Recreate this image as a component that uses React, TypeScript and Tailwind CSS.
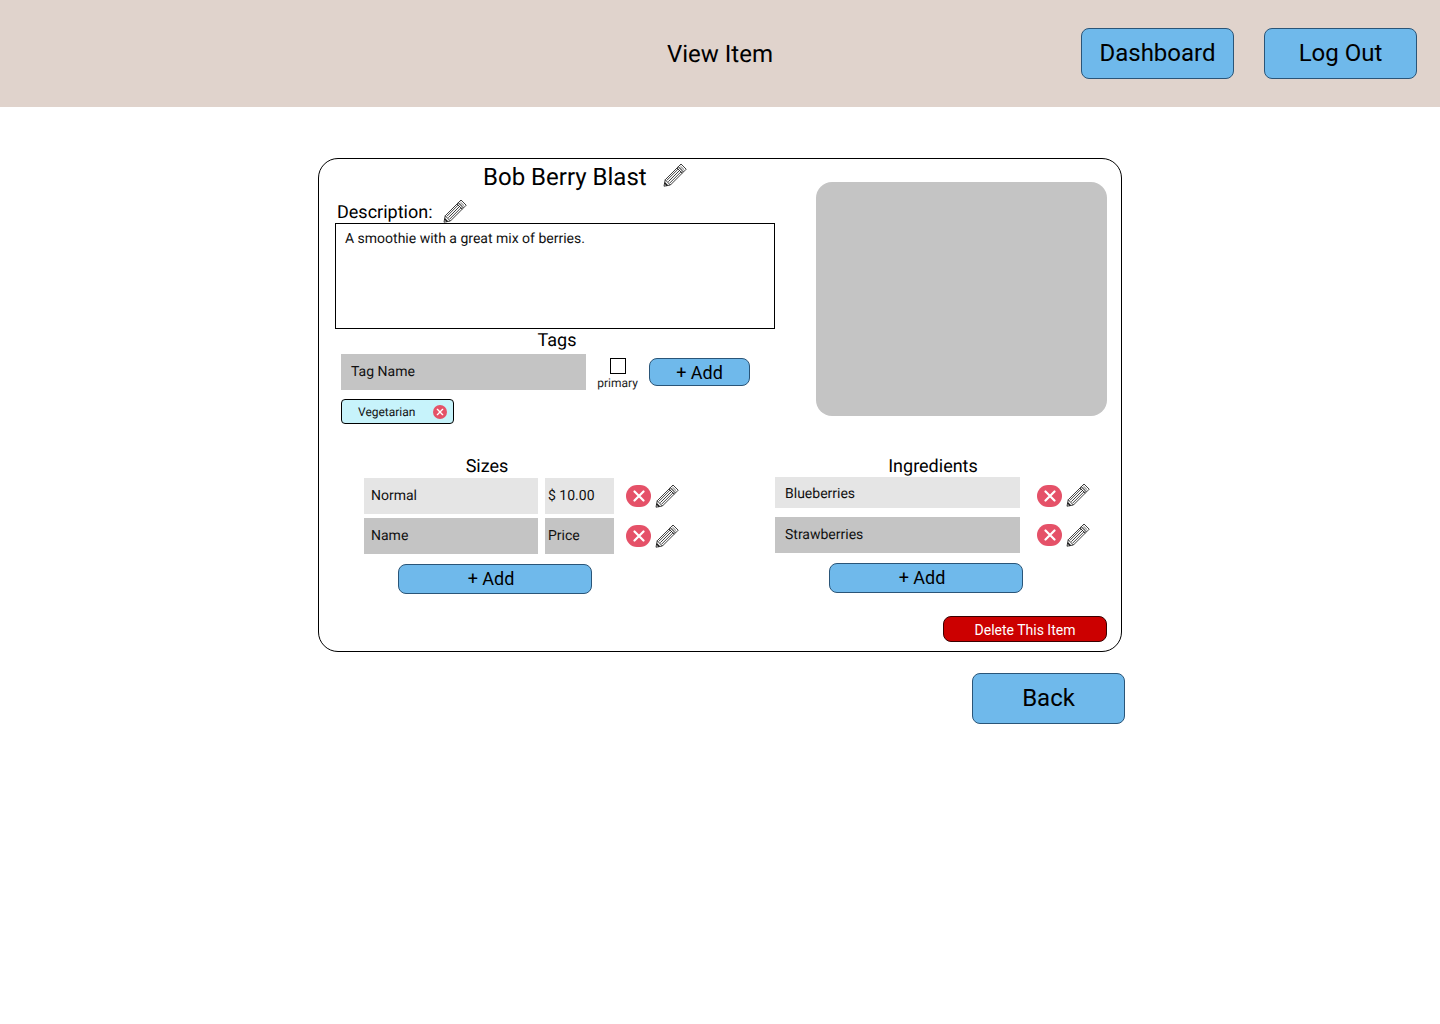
import React from "react";

function Pencil({ className = "" }: { className?: string }) {
  return (
    <svg viewBox="0 0 24 24" className={`block w-6 h-6 shrink-0 ${className}`} fill="none" stroke="#1a1a1a" strokeWidth="0.85">
      <path d="M18 1 L23.2 6.2 L7.4 22 L1 23.2 L2.2 16.8 Z" fill="#fff" />
      <path d="M15.2 3.8 L20.4 9" />
      <path d="M14 5 L19.2 10.2" />
      <path d="M15.4 5.8 L3.9 17.3" />
      <path d="M16.9 7.1 L5.3 18.7" />
      <path d="M18.2 8.6 L6.7 20.1" />
      <path d="M2.2 16.8 L7.4 22" />
      <path d="M1.6 19.8 L4.4 22.6" strokeWidth="1.6" />
      <path d="M17.4 3 L21 6.6" strokeWidth="0.6" />
      <path d="M16.3 4 L19.9 7.6" strokeWidth="0.6" />
    </svg>
  );
}

function RemoveBadge() {
  return (
    <span className="flex w-[25px] h-[22px] shrink-0 items-center justify-center rounded-[11px] bg-[#e55168]">
      <svg viewBox="0 0 12 12" className="block w-3 h-3" stroke="#fff" strokeWidth="2.2" strokeLinecap="round">
        <path d="M1.5 1.5 L10.5 10.5 M10.5 1.5 L1.5 10.5" />
      </svg>
    </span>
  );
}

function BlueButton({ className, children }: { className: string; children: React.ReactNode }) {
  return (
    <button className={`flex items-center justify-center bg-[#6fb9eb] border border-[#2a5578] text-black ${className}`}>
      {children}
    </button>
  );
}

function Field({ className, children }: { className: string; children: React.ReactNode }) {
  return <div className={`flex items-center text-sm text-[#111] ${className}`}>{children}</div>;
}

export default function App() {
  return (
    <div className="min-h-[1024px] bg-white text-black font-['Roboto',sans-serif] [text-rendering:geometricPrecision]">
      <header className="flex h-[107px] items-center bg-[#e0d3cc]">
        <h1 className="ml-[667px] w-[414px] text-2xl leading-7 font-normal">View Item</h1>
        <BlueButton className="w-[153px] h-[51px] rounded-lg pb-[1px] text-2xl">Dashboard</BlueButton>
        <BlueButton className="ml-[30px] w-[153px] h-[51px] rounded-lg pb-[1px] text-2xl">Log Out</BlueButton>
      </header>

      <main className="ml-[318px] mt-[51px] w-[807px]">
        <section className="w-[804px] h-[494px] rounded-[20px] border border-black">
          <div className="flex">
            <div className="w-[456px] ml-[16px]">
              <div className="flex h-[38px] items-center pl-[148px]">
                <h2 className="-mt-[2px] text-2xl leading-7 font-normal">Bob Berry Blast</h2>
                <Pencil className="ml-[16px] -mt-[6px]" />
              </div>
              <div className="flex h-[26px] items-center pl-[2px]">
                <span className="mt-[5px] text-lg leading-6">Description:</span>
                <Pencil className="ml-[11px] mt-[2px]" />
              </div>
              <div className="h-[106px] w-[440px] border border-black px-[9px] pt-[7px] text-sm leading-4 text-[#111]">
                A smoothie with a great mix of berries.
              </div>
              <div className="h-[25px] w-[444px] pt-[1px] text-center text-lg leading-[22px]">Tags</div>
              <div className="flex pl-[6px]">
                <Field className="w-[245px] h-[36px] bg-[#c4c4c4] pl-[10px]">Tag Name</Field>
                <div className="flex w-[63px] flex-col items-center pt-[4px]">
                  <span className="block w-4 h-4 border border-black bg-white" />
                  <span className="mt-[1px] text-xs leading-4 text-[#222]">primary</span>
                </div>
                <BlueButton className="mt-[4px] w-[101px] h-[28px] rounded-lg pt-[2px] text-lg">+ Add</BlueButton>
              </div>
              <div className="ml-[6px] mt-[8px] flex h-[25px] w-[113px] items-center rounded border border-black bg-[#c7f3fb] pl-[16px] text-xs text-[#111]">
                <span className="w-[75px]">Vegetarian</span>
                <span className="flex w-[14px] h-[14px] items-center justify-center rounded-full bg-[#e55168]">
                  <svg viewBox="0 0 12 12" className="block w-2 h-2" stroke="#fff" strokeWidth="2" strokeLinecap="round">
                    <path d="M2 2 L10 10 M10 2 L2 10" />
                  </svg>
                </span>
              </div>
            </div>
            <div className="ml-[25px] mt-[23px] w-[291px] h-[234px] rounded-2xl bg-[#c4c4c4]" />
          </div>

          <div className="mt-[31px] flex">
            <div className="w-[456px] pl-[45px]">
              <div className="h-[22px] w-[246px] pt-[1px] text-center text-lg leading-[22px]">Sizes</div>
              <div className="mt-[1px] flex items-center">
                <Field className="w-[174px] h-[36px] bg-[#e5e5e5] pl-[7px]">Normal</Field>
                <Field className="ml-[7px] w-[69px] h-[36px] bg-[#e5e5e5] pl-[3px]">$ 10.00</Field>
                <div className="ml-[12px]"><RemoveBadge /></div>
                <Pencil className="ml-[4px]" />
              </div>
              <div className="mt-[4px] flex items-center">
                <Field className="w-[174px] h-[36px] bg-[#c4c4c4] pl-[7px]">Name</Field>
                <Field className="ml-[7px] w-[69px] h-[36px] bg-[#c4c4c4] pl-[3px]">Price</Field>
                <div className="ml-[12px]"><RemoveBadge /></div>
                <Pencil className="ml-[4px]" />
              </div>
              <BlueButton className="ml-[34px] mt-[10px] w-[194px] h-[30px] rounded-lg pr-[8px] pb-[1px] text-lg">+ Add</BlueButton>
            </div>

            <div className="w-[346px]">
              <div className="h-[22px] w-[316px] pt-[1px] text-center text-lg leading-[22px]">Ingredients</div>
              <div className="flex h-[31px] items-center">
                <Field className="w-[245px] h-[31px] bg-[#e5e5e5] pl-[10px] pt-[3px]">Blueberries</Field>
                <div className="ml-[17px] mt-[6px]"><RemoveBadge /></div>
                <Pencil className="ml-[4px] mt-[5px]" />
              </div>
              <div className="mt-[9px] flex items-center">
                <Field className="w-[245px] h-[36px] bg-[#c4c4c4] pl-[10px]">Strawberries</Field>
                <div className="ml-[17px]"><RemoveBadge /></div>
                <Pencil className="ml-[4px]" />
              </div>
              <BlueButton className="ml-[54px] mt-[10px] w-[194px] h-[30px] rounded-lg pr-[8px] pb-[1px] text-lg">+ Add</BlueButton>
              <button className="ml-[168px] mt-[23px] flex w-[164px] h-[26px] items-center justify-center rounded-lg border border-[#3a0000] bg-[#cc0000] pt-[1px] text-sm text-white">
                Delete This Item
              </button>
            </div>
          </div>
        </section>

        <BlueButton className="ml-[654px] mt-[21px] w-[153px] h-[51px] rounded-lg pb-[2px] text-2xl">Back</BlueButton>
      </main>
    </div>
  );
}
